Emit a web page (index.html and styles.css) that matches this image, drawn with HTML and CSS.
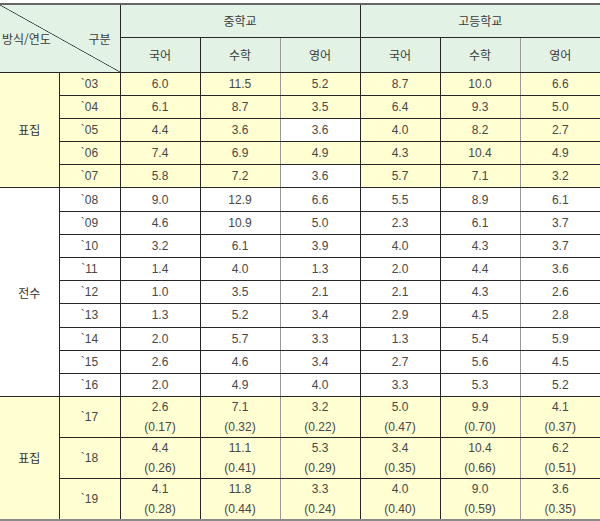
FILE: index.html
```html
<!DOCTYPE html>
<html lang="ko">
<head>
<meta charset="utf-8">
<title>표</title>
<link rel="stylesheet" href="styles.css">
</head>
<body>
<table class="t">
<colgroup><col class="c1"><col class="c2"><col class="c3"><col class="c3"><col class="c3"><col class="c3"><col class="c3"><col class="c3"></colgroup>
<thead>
<tr class="h1">
<th class="diag" colspan="2" rowspan="2"><div class="dg"><span>방식/연도</span><span class="gubun">구분</span></div></th>
<th colspan="3">중학교</th>
<th colspan="3">고등학교</th>
</tr>
<tr class="h2">
<th>국어</th><th class="g">수학</th><th>영어</th>
<th>국어</th><th class="g">수학</th><th>영어</th>
</tr>
</thead>
<tbody>
<tr class="r y"><td class="lab" rowspan="5">표집</td><td>`03</td><td>6.0</td><td class="g">11.5</td><td>5.2</td><td>8.7</td><td class="g">10.0</td><td>6.6</td></tr>
<tr class="r y"><td>`04</td><td>6.1</td><td class="g">8.7</td><td>3.5</td><td>6.4</td><td class="g">9.3</td><td>5.0</td></tr>
<tr class="r y"><td>`05</td><td>4.4</td><td class="g">3.6</td><td class="w">3.6</td><td>4.0</td><td class="g">8.2</td><td>2.7</td></tr>
<tr class="r y"><td>`06</td><td>7.4</td><td class="g">6.9</td><td>4.9</td><td>4.3</td><td class="g">10.4</td><td>4.9</td></tr>
<tr class="r y"><td>`07</td><td>5.8</td><td class="g">7.2</td><td class="w">3.6</td><td>5.7</td><td class="g">7.1</td><td>3.2</td></tr>
<tr class="r"><td class="lab" rowspan="9">전수</td><td>`08</td><td>9.0</td><td class="g">12.9</td><td>6.6</td><td>5.5</td><td class="g">8.9</td><td>6.1</td></tr>
<tr class="r"><td>`09</td><td>4.6</td><td class="g">10.9</td><td>5.0</td><td>2.3</td><td class="g">6.1</td><td>3.7</td></tr>
<tr class="r"><td>`10</td><td>3.2</td><td class="g">6.1</td><td>3.9</td><td>4.0</td><td class="g">4.3</td><td>3.7</td></tr>
<tr class="r"><td>`11</td><td>1.4</td><td class="g">4.0</td><td>1.3</td><td>2.0</td><td class="g">4.4</td><td>3.6</td></tr>
<tr class="r"><td>`12</td><td>1.0</td><td class="g">3.5</td><td>2.1</td><td>2.1</td><td class="g">4.3</td><td>2.6</td></tr>
<tr class="r"><td>`13</td><td>1.3</td><td class="g">5.2</td><td>3.4</td><td>2.9</td><td class="g">4.5</td><td>2.8</td></tr>
<tr class="r"><td>`14</td><td>2.0</td><td class="g">5.7</td><td>3.3</td><td>1.3</td><td class="g">5.4</td><td>5.9</td></tr>
<tr class="r"><td>`15</td><td>2.6</td><td class="g">4.6</td><td>3.4</td><td>2.7</td><td class="g">5.6</td><td>4.5</td></tr>
<tr class="r"><td>`16</td><td>2.0</td><td class="g">4.9</td><td>4.0</td><td>3.3</td><td class="g">5.3</td><td>5.2</td></tr>
<tr class="r2 y"><td class="lab" rowspan="3">표집</td><td>`17</td><td>2.6<br>(0.17)</td><td class="g">7.1<br>(0.32)</td><td>3.2<br>(0.22)</td><td>5.0<br>(0.47)</td><td class="g">9.9<br>(0.70)</td><td>4.1<br>(0.37)</td></tr>
<tr class="r2 y gt"><td>`18</td><td>4.4<br>(0.26)</td><td class="g">11.1<br>(0.41)</td><td>5.3<br>(0.29)</td><td>3.4<br>(0.35)</td><td class="g">10.4<br>(0.66)</td><td>6.2<br>(0.51)</td></tr>
<tr class="r2 y gt"><td>`19</td><td>4.1<br>(0.28)</td><td class="g">11.8<br>(0.44)</td><td>3.3<br>(0.24)</td><td>4.0<br>(0.40)</td><td class="g">9.0<br>(0.59)</td><td>3.6<br>(0.35)</td></tr>
</tbody>
</table>
</body>
</html>
```

FILE: styles.css
```css
html, body {
  margin: 0;
  padding: 0;
  background: #ffffff;
}

.t {
  border-collapse: collapse;
  table-layout: fixed;
  width: 600px;
  margin-top: 3px;
  border-top: 2px solid #666666;
  border-bottom: 2px solid #8a8a8a;
  border-left: hidden;
  border-right: hidden;
  font-family: "Liberation Sans", "Noto Sans CJK KR", sans-serif;
  font-size: 12px;
  color: #474747;
}

.c1 { width: 59px; }
.c2 { width: 61px; }
.c3 { width: 80px; }

.t th,
.t td {
  padding: 0;
  border: 1px solid #262626;
  text-align: center;
  vertical-align: middle;
  font-weight: normal;
}

.t th {
  background: #e2f2e5;
  font-family: "Noto Sans CJK KR", sans-serif;
  color: #3a3a3a;
}

.h1 { height: 33px; }
.h2 { height: 35px; }

.t th.diag {
  background: linear-gradient(to top right, transparent calc(50% - 0.7px), #2a2a2a 50%, transparent calc(50% + 0.7px)), #e2f2e5;
}

.dg {
  display: flex;
  justify-content: space-between;
  align-items: center;
  padding: 0 9px 0 2px;
}

.r { height: 23.2px; }
.r2 { height: 40.3px; line-height: 20px; }

.y td { background: #ffffd2; }
.y td.w { background: #ffffff; }

.t td.g,
.t th.g {
  border-right-color: #999999;
}

.gt td { border-top-color: #9a9a9a; }

.t td.lab {
  font-family: "Noto Sans CJK KR", sans-serif;
  color: #333333;
}
```
